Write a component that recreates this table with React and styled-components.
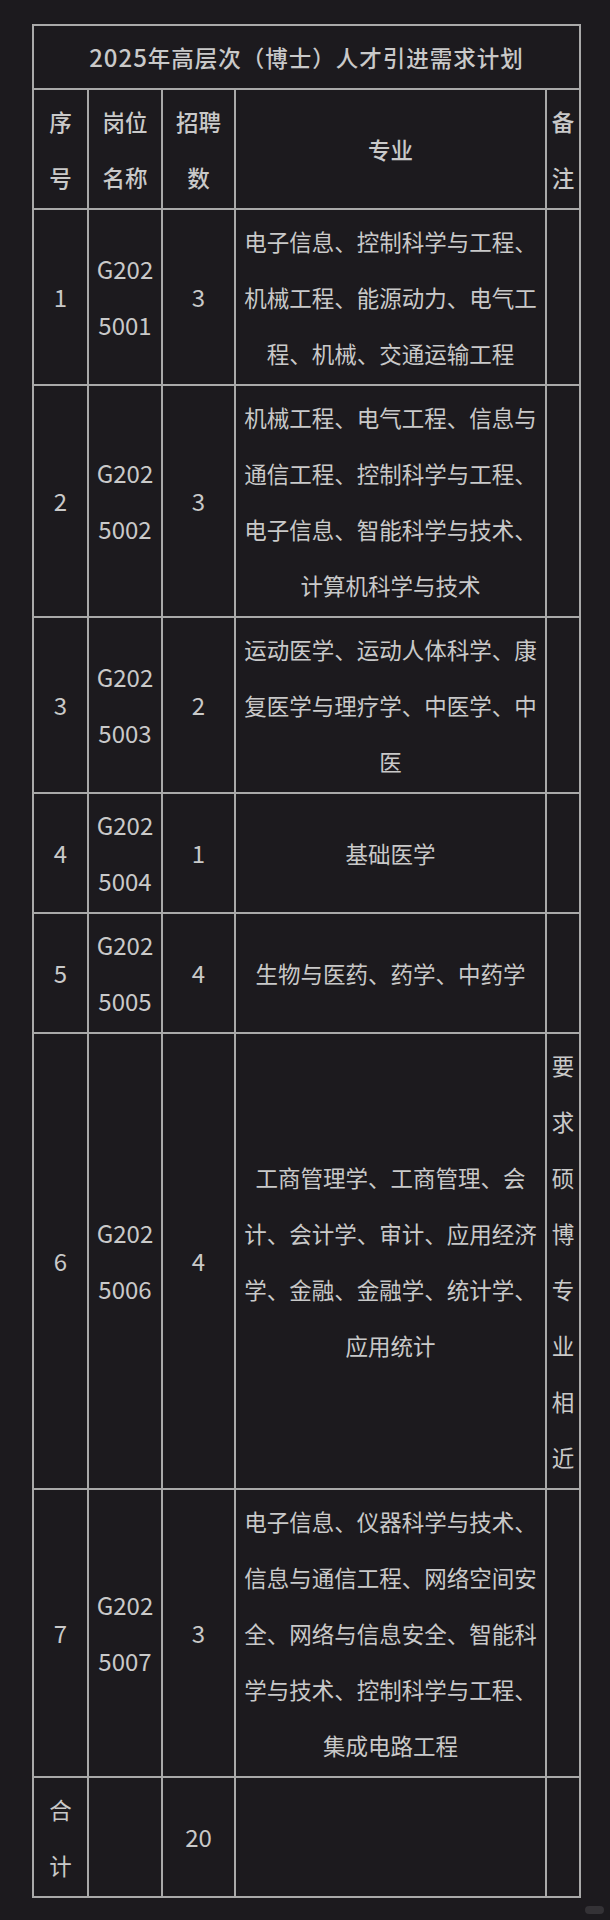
import React from "react";
import styled, { createGlobalStyle } from "styled-components";

const Global = createGlobalStyle`
  html, body { margin: 0; padding: 0; background: #1c1a1e; }
  body { font-family: "Noto Sans CJK SC", "Noto Sans", sans-serif; }
`;

const Page = styled.div`
  position: relative;
  width: 610px;
  min-height: 1920px;
  box-sizing: border-box;
  padding: 24px 31px 0 32px;
  background: #1c1a1e;
`;

const Table = styled.table`
  width: 547px;
  table-layout: fixed;
  border-collapse: collapse;
  color: #c9c9c9;
  font-size: 22.5px;
  line-height: 56px;
`;

const Cell = styled.td`
  border: 2px solid #a9a9a9;
  padding: 3px 6px;
  text-align: center;
  vertical-align: middle;
  word-break: break-all;
  font-weight: ${(p) => (p.$bold ? 500 : 400)};
  ${(p) => (p.$tight ? "padding-left: 2px; padding-right: 2px;" : "")}
`;

const Title = styled(Cell)`
  font-weight: 500;
  letter-spacing: 1px;
`;

const Num = styled.span`
  font-size: 24px;
`;

const Watermark = styled.div`
  position: absolute;
  left: 585px;
  top: 1906px;
  width: 19px;
  height: 8px;
  border-radius: 4px;
  background: #343236;
`;

const rows = [
  ["1", "G2025001", "3", "电子信息、控制科学与工程、机械工程、能源动力、电气工程、机械、交通运输工程", ""],
  ["2", "G2025002", "3", "机械工程、电气工程、信息与通信工程、控制科学与工程、电子信息、智能科学与技术、计算机科学与技术", ""],
  ["3", "G2025003", "2", "运动医学、运动人体科学、康复医学与理疗学、中医学、中医", ""],
  ["4", "G2025004", "1", "基础医学", ""],
  ["5", "G2025005", "4", "生物与医药、药学、中药学", ""],
  ["6", "G2025006", "4", "工商管理学、工商管理、会计、会计学、审计、应用经济学、金融、金融学、统计学、应用统计", "要求硕博专业相近"],
  ["7", "G2025007", "3", "电子信息、仪器科学与技术、信息与通信工程、网络空间安全、网络与信息安全、智能科学与技术、控制科学与工程、集成电路工程", ""],
];

export default function App() {
  return (
    <>
      <Global />
      <Page>
        <Table>
          <colgroup>
            <col style={{ width: 55 }} />
            <col style={{ width: 74 }} />
            <col style={{ width: 73 }} />
            <col style={{ width: 311 }} />
            <col style={{ width: 34 }} />
          </colgroup>
          <tbody>
            <tr>
              <Title colSpan={5}>
                <Num>2025</Num>年高层次（博士）人才引进需求计划
              </Title>
            </tr>
            <tr>
              <Cell $bold>序号</Cell>
              <Cell $bold>岗位名称</Cell>
              <Cell $bold>招聘数</Cell>
              <Cell $bold>专业</Cell>
              <Cell $bold $tight>备注</Cell>
            </tr>
            {rows.map((r) => (
              <tr key={r[0]}>
                <Cell><Num>{r[0]}</Num></Cell>
                <Cell><Num>{r[1]}</Num></Cell>
                <Cell><Num>{r[2]}</Num></Cell>
                <Cell>{r[3]}</Cell>
                <Cell $tight>{r[4]}</Cell>
              </tr>
            ))}
            <tr>
              <Cell>合计</Cell>
              <Cell />
              <Cell><Num>20</Num></Cell>
              <Cell />
              <Cell $tight />
            </tr>
          </tbody>
        </Table>
        <Watermark />
      </Page>
    </>
  );
}
